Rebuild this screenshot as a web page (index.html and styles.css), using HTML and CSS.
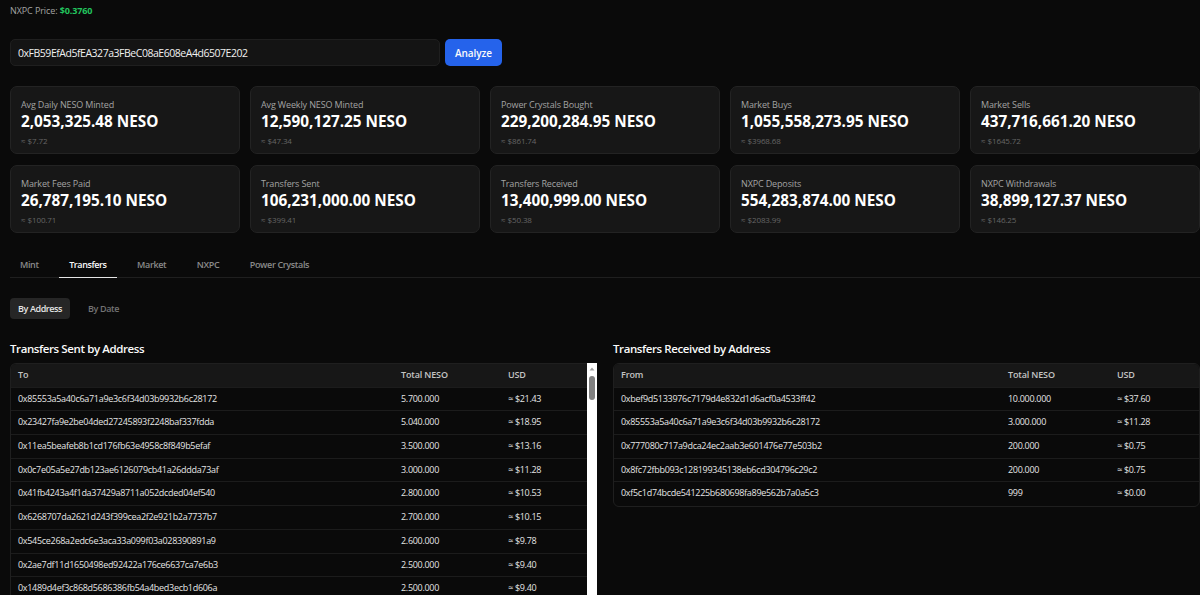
FILE: index.html
```html
<!DOCTYPE html>
<html lang="en">
<head>
<meta charset="utf-8">
<title>NESO Analyzer</title>
<link rel="stylesheet" href="styles.css">
</head>
<body>
<main class="page">
  <p class="price">NXPC Price: <strong>$0.3760</strong></p>
  <form class="search">
    <div class="address">0xFB59EfAd5fEA327a3FBeC08aE608eA4d6507E202</div>
    <button class="analyze" type="button">Analyze</button>
  </form>
  <section class="cards">
    <article class="card"><h3>Avg Daily NESO Minted</h3><div class="value">2,053,325.48 NESO</div><div class="usd">≈ $7.72</div></article>
    <article class="card"><h3>Avg Weekly NESO Minted</h3><div class="value">12,590,127.25 NESO</div><div class="usd">≈ $47.34</div></article>
    <article class="card"><h3>Power Crystals Bought</h3><div class="value">229,200,284.95 NESO</div><div class="usd">≈ $861.74</div></article>
    <article class="card"><h3>Market Buys</h3><div class="value">1,055,558,273.95 NESO</div><div class="usd">≈ $3968.68</div></article>
    <article class="card"><h3>Market Sells</h3><div class="value">437,716,661.20 NESO</div><div class="usd">≈ $1645.72</div></article>
    <article class="card"><h3>Market Fees Paid</h3><div class="value">26,787,195.10 NESO</div><div class="usd">≈ $100.71</div></article>
    <article class="card"><h3>Transfers Sent</h3><div class="value">106,231,000.00 NESO</div><div class="usd">≈ $399.41</div></article>
    <article class="card"><h3>Transfers Received</h3><div class="value">13,400,999.00 NESO</div><div class="usd">≈ $50.38</div></article>
    <article class="card"><h3>NXPC Deposits</h3><div class="value">554,283,874.00 NESO</div><div class="usd">≈ $2083.99</div></article>
    <article class="card"><h3>NXPC Withdrawals</h3><div class="value">38,899,127.37 NESO</div><div class="usd">≈ $146.25</div></article>
  </section>
  <nav class="tabs">
    <span class="tab">Mint</span>
    <span class="tab active">Transfers</span>
    <span class="tab">Market</span>
    <span class="tab">NXPC</span>
    <span class="tab">Power Crystals</span>
  </nav>
  <div class="subtabs">
    <span class="subtab active">By Address</span>
    <span class="subtab">By Date</span>
  </div>
  <section class="tables">
    <div class="panel">
      <h2>Transfers Sent by Address</h2>
      <div class="scrollwrap">
        <div class="tablebox flat">
          <div class="row head left"><span>To</span><span>Total NESO</span><span>USD</span></div>
          <div class="row left"><span>0x85553a5a40c6a71a9e3c6f34d03b9932b6c28172</span><span>5.700.000</span><span>≈ $21.43</span></div>
          <div class="row left"><span>0x23427fa9e2be04ded27245893f2248baf337fdda</span><span>5.040.000</span><span>≈ $18.95</span></div>
          <div class="row left"><span>0x11ea5beafeb8b1cd176fb63e4958c8f849b5efaf</span><span>3.500.000</span><span>≈ $13.16</span></div>
          <div class="row left"><span>0x0c7e05a5e27db123ae6126079cb41a26ddda73af</span><span>3.000.000</span><span>≈ $11.28</span></div>
          <div class="row left"><span>0x41fb4243a4f1da37429a8711a052dcded04ef540</span><span>2.800.000</span><span>≈ $10.53</span></div>
          <div class="row left"><span>0x6268707da2621d243f399cea2f2e921b2a7737b7</span><span>2.700.000</span><span>≈ $10.15</span></div>
          <div class="row left"><span>0x545ce268a2edc6e3aca33a099f03a028390891a9</span><span>2.600.000</span><span>≈ $9.78</span></div>
          <div class="row left"><span>0x2ae7df11d1650498ed92422a176ce6637ca7e6b3</span><span>2.500.000</span><span>≈ $9.40</span></div>
          <div class="row left"><span>0x1489d4ef3c868d5686386fb54a4bed3ecb1d606a</span><span>2.500.000</span><span>≈ $9.40</span></div>
        </div>
        <div class="scrollbar" aria-hidden="true">
          <svg class="arrow" width="10" height="12" viewBox="0 0 10 12"><path d="M2.5 7.5 5 4.5 7.5 7.5Z"/></svg>
          <div class="thumb"></div>
        </div>
      </div>
    </div>
    <div class="panel">
      <h2>Transfers Received by Address</h2>
      <div class="tablebox">
        <div class="row head right"><span>From</span><span>Total NESO</span><span>USD</span></div>
        <div class="row right"><span>0xbef9d5133976c7179d4e832d1d6acf0a4533ff42</span><span>10.000.000</span><span>≈ $37.60</span></div>
        <div class="row right"><span>0x85553a5a40c6a71a9e3c6f34d03b9932b6c28172</span><span>3.000.000</span><span>≈ $11.28</span></div>
        <div class="row right"><span>0x777080c717a9dca24ec2aab3e601476e77e503b2</span><span>200.000</span><span>≈ $0.75</span></div>
        <div class="row right"><span>0x8fc72fbb093c128199345138eb6cd304796c29c2</span><span>200.000</span><span>≈ $0.75</span></div>
        <div class="row right"><span>0xf5c1d74bcde541225b680698fa89e562b7a0a5c3</span><span>999</span><span>≈ $0.00</span></div>
      </div>
    </div>
  </section>
</main>
</body>
</html>
```

FILE: styles.css
```css
* { box-sizing: border-box; }
html, body { margin: 0; height: 100%; overflow: hidden; }
body {
  background: #0a0a0a;
  color: #fafafa;
  font-family: "Open Sans", "Noto Sans", sans-serif;
  font-size: 9px;
}
.page { padding: 4px 0 0 10px; width: 1200px; }
.price { margin: 0; height: 14px; line-height: 14px; font-size: 9px; letter-spacing: -0.1px; color: #a3a3a3; }
.price strong { color: #22c55e; font-weight: 700; }
.search { display: flex; gap: 5px; margin-top: 21px; height: 27px; }
.address {
  width: 430px;
  padding: 0 7px;
  line-height: 26px;
  font-size: 10.5px;
  letter-spacing: -0.47px;
  color: #f0f0f0;
  background: #141414;
  border: 1px solid #1f1f1f;
  border-radius: 5px;
}
.analyze {
  width: 57px;
  border: 0;
  border-radius: 5px;
  background: #2563eb;
  color: #fafafa;
  font: 600 10px "Open Sans", sans-serif;
  letter-spacing: -0.1px;
}
.cards {
  display: grid;
  grid-template-columns: repeat(5, 230px);
  column-gap: 10px;
  row-gap: 11px;
  margin-top: 20px;
}
.card {
  height: 68px;
  padding: 11px 10px 0;
  background: #171717;
  border: 1px solid #232323;
  border-radius: 7px;
}
.card h3 { margin: 0; font-size: 9px; line-height: 13px; font-weight: 400; letter-spacing: -0.14px; color: #a3a3a3; }
.value { font-size: 15.3px; line-height: 20.5px; font-weight: 700; color: #fff; }
.usd { font-size: 8px; line-height: 12px; margin-top: 3px; letter-spacing: -0.1px; color: #666; }
.tabs {
  display: flex;
  gap: 10.5px;
  margin-top: 19px;
  height: 26px;
  border-bottom: 1px solid #1f1f1f;
}
.tab {
  padding: 0 10px;
  line-height: 25px;
  font-size: 9px;
  font-weight: 600;
  letter-spacing: -0.35px;
  color: #8a8a8a;
  height: 26px;
}
.tab.active { color: #fafafa; border-bottom: 1px solid #e5e5e5; letter-spacing: -0.4px; }
.subtabs { display: flex; gap: 10px; margin-top: 20px; height: 21px; }
.subtab {
  padding: 0 8px;
  line-height: 22px;
  font-size: 9px;
  font-weight: 600;
  letter-spacing: -0.4px;
  color: #737373;
  border-radius: 4px;
}
.subtab.active { background: #262626; color: #e5e5e5; }
.tables { display: grid; grid-template-columns: 587px 587px; column-gap: 16px; margin-top: 22px; }
.panel h2 { margin: 0 0 7px; font-size: 11.5px; line-height: 15px; font-weight: 600; letter-spacing: -0.4px; color: #fafafa; }
.scrollwrap { display: flex; height: 260px; overflow: hidden; }
.tablebox {
  flex: 1;
  min-width: 0;
  border: 1px solid #1f1f1f;
  border-radius: 6px;
  overflow: hidden;
  align-self: flex-start;
}
.tablebox.flat { border-right: 0; border-radius: 6px 0 0 0; }
.row {
  display: grid;
  height: 23.7px;
  line-height: 22.5px;
  padding-left: 7px;
  font-size: 9px;
  letter-spacing: -0.3px;
  color: #e5e5e5;
  border-bottom: 1px solid #1c1c1c;
}
.row:last-child { border-bottom: 0; }
.row.left { grid-template-columns: 383px 107px 1fr; }
.row.right { grid-template-columns: 387px 109px 1fr; }
.row.head { background: #171717; font-weight: 600; letter-spacing: -0.15px; color: #c4c4c4; }
.scrollbar { flex: 0 0 10px; background: #fff; display: flex; flex-direction: column; align-items: center; height: 260px; }
.arrow { fill: #a0a0a0; flex: none; }
.thumb { width: 6px; height: 24px; margin-top: 1px; border-radius: 3px; background: #808080; }
```
